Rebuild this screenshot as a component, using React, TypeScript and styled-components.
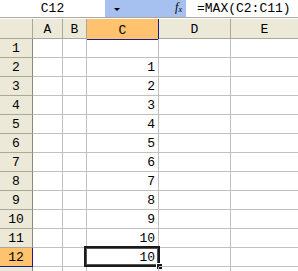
import React from "react";
import styled, { createGlobalStyle, css } from "styled-components";

const GlobalStyle = createGlobalStyle`
  html, body {
    margin: 0;
    padding: 0;
    background: #ffffff;
    overflow: hidden;
  }
  body {
    font-family: "Liberation Mono", "DejaVu Sans Mono", monospace;
    font-size: 13px;
    color: #000000;
  }
`;

const columns = [
  { name: "A", width: 30 },
  { name: "B", width: 24 },
  { name: "C", width: 72 },
  { name: "D", width: 72 },
  { name: "E", width: 68 },
];

// last row only peeks in under the window edge, so no label is visible
const values: (number | null)[] = [null, 1, 2, 3, 4, 5, 6, 7, 8, 9, 10, 10, null];
const visibleRows = 12;

const activeCol = "C";
const activeRow = 12;

function App() {
  return (
    <Sheet>
      <GlobalStyle />
      <FormulaBar>
        <NameBox>C12</NameBox>
        <NameTools>
          <DropArrow />
          <FxLabel>
            f<sub>x</sub>
          </FxLabel>
        </NameTools>
        <FormulaText>=MAX(C2:C11)</FormulaText>
      </FormulaBar>
      <Grid>
        <HeaderRow>
          <Corner />
          {columns.map((col) => (
            <ColHeader
              key={col.name}
              $width={col.width}
              $active={col.name === activeCol}
            >
              {col.name}
            </ColHeader>
          ))}
        </HeaderRow>
        {values.map((value, i) => {
          const row = i + 1;
          return (
            <Row key={row}>
              <RowHeader $active={row === activeRow}>
                {row <= visibleRows ? row : ""}
              </RowHeader>
              {columns.map((col) => (
                <Cell key={col.name} $width={col.width}>
                  {col.name === "C" && value !== null ? value : ""}
                  {col.name === activeCol && row === activeRow && (
                    <Selection>
                      <FillHandle />
                    </Selection>
                  )}
                </Cell>
              ))}
            </Row>
          );
        })}
      </Grid>
    </Sheet>
  );
}

const Sheet = styled.div`
  width: 298px;
  height: 271px;
  overflow: hidden;
  background: #ffffff;
`;

const FormulaBar = styled.div`
  display: flex;
  align-items: stretch;
  height: 17px;
  border-bottom: 1px solid #a9a9a0;
`;

const NameBox = styled.div`
  width: 105px;
  display: flex;
  align-items: center;
  justify-content: center;
  line-height: 17px;
  font-size: 13px;
`;

const NameTools = styled.div`
  width: 81px;
  display: flex;
  align-items: center;
  justify-content: space-between;
  padding: 0 4px 0 9px;
  box-sizing: border-box;
  background: #a6c1f0;
`;

const DropArrow = styled.span`
  width: 0;
  height: 0;
  border-left: 3px solid transparent;
  border-right: 3px solid transparent;
  border-top: 3px solid #000000;
  margin-top: 1px;
`;

const FxLabel = styled.span`
  font-family: "Liberation Serif", serif;
  font-style: italic;
  font-size: 12px;
  line-height: 12px;
  sub {
    font-size: 8px;
    vertical-align: -1px;
  }
`;

const FormulaText = styled.div`
  flex: 1;
  padding-left: 11px;
  line-height: 17px;
  white-space: nowrap;
  overflow: hidden;
`;

const Grid = styled.div`
  display: flex;
  flex-direction: column;
`;

const HeaderRow = styled.div`
  display: flex;
  height: 21px;
  background: #ece9d8;
  border-top: 1px solid #ffffff;
  border-bottom: 1px solid #aca899;
  box-sizing: border-box;
`;

const headerCell = css`
  display: flex;
  align-items: center;
  justify-content: center;
  box-sizing: border-box;
  background: #ece9d8;
  color: #000000;
`;

const Corner = styled.div`
  ${headerCell};
  width: 33px;
  flex-shrink: 0;
  border-right: 1px solid #aca899;
`;

const ColHeader = styled.div<{ $width: number; $active: boolean }>`
  ${headerCell};
  width: ${({ $width }) => $width}px;
  flex-shrink: 0;
  border-right: 1px solid #aca899;
  padding-top: 1px;

  ${({ $active }) =>
    $active &&
    css`
      background: #ffc36f;
      border-right: 1px solid #1c1c8c;
      box-shadow: inset 0 -1px 0 #1c1c8c;
      margin-bottom: -1px;
      height: 21px;
    `}
`;

const Row = styled.div`
  display: flex;
  height: 19px;
  flex-shrink: 0;
`;

const RowHeader = styled.div<{ $active: boolean }>`
  ${headerCell};
  width: 33px;
  flex-shrink: 0;
  border-right: 1px solid #8a8a78;
  border-bottom: 1px solid #aca899;

  ${({ $active }) =>
    $active &&
    css`
      background: #ffc36f;
      border-right: 1px solid #1c1c8c;
      border-bottom: 1px solid #1c1c8c;
    `}
`;

const Cell = styled.div<{ $width: number }>`
  position: relative;
  width: ${({ $width }) => $width}px;
  flex-shrink: 0;
  box-sizing: border-box;
  border-right: 1px solid #c0c0c0;
  border-bottom: 1px solid #c0c0c0;
  text-align: right;
  padding-right: 3px;
  line-height: 19px;
`;

const Selection = styled.div`
  position: absolute;
  left: -3px;
  top: -2px;
  right: -2px;
  bottom: -1px;
  border: 2px solid #1a1a1a;
  box-shadow: inset 0 0 0 1px #555555;
  pointer-events: none;
`;

const FillHandle = styled.div`
  position: absolute;
  right: -4px;
  bottom: -4px;
  width: 5px;
  height: 5px;
  background: #1a1a1a;
  border: 1px solid #ffffff;
  border-right: none;
  border-bottom: none;
`;

export default App;
